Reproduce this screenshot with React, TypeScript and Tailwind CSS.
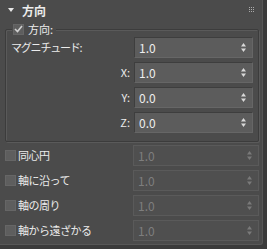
import React from 'react';

const font = { fontFamily: '"Noto Sans CJK JP", "DejaVu Sans", sans-serif' };

const Arrows: React.FC<{ disabled?: boolean }> = ({ disabled }) => (
  <svg width="5" height="9" viewBox="0 0 5 9" className="shrink-0">
    <path d="M2.5 0 L5 3.5 L0 3.5 Z" fill={disabled ? '#7a7a7a' : '#d8d8d8'} />
    <path d="M2.5 9 L5 5.5 L0 5.5 Z" fill={disabled ? '#7a7a7a' : '#d8d8d8'} />
  </svg>
);

const Spinner: React.FC<{ value: string; disabled?: boolean; className?: string }> = ({ value, disabled, className }) => (
  <div
    className={`h-[21px] flex items-center justify-between pl-[4px] pr-[6px] border ${
      disabled
        ? 'bg-[#4f4f4f] border-[#5a5a5a] text-[#7e7e7e]'
        : 'bg-[#5c5c5c] border-t-[#3e3e3e] border-l-[#3e3e3e] border-r-[#666666] border-b-[#666666] text-[#eeeeee]'
    } ${className ?? ''}`}
  >
    <span className="text-[12px] leading-none">{value}</span>
    <Arrows disabled={disabled} />
  </div>
);

const Box: React.FC<{ checked?: boolean }> = ({ checked }) => (
  <div className="w-[11px] h-[11px] bg-[#5e5e5e] border border-[#666] flex items-center justify-center shrink-0">
    {checked && (
      <svg width="9" height="8" viewBox="0 0 9 8">
        <path d="M1 4 L3.5 6.5 L8 1" stroke="#d0d0d0" strokeWidth="1.6" fill="none" />
      </svg>
    )}
  </div>
);

export default function App() {
  const axes = [
    { label: 'X:', value: '1.0' },
    { label: 'Y:', value: '0.0' },
    { label: 'Z:', value: '0.0' },
  ];
  const opts = ['同心円', '軸に沿って', '軸の周り', '軸から遠ざかる'];

  return (
    <div className="w-[267px] h-[249px] bg-[#3b3b3b] pr-[4px] pb-[4px] text-[11px] text-[#ececec]" style={font}>
      <div className="h-full bg-[#4b4b4b] border border-[#575757] border-t-0 border-l-0 rounded-br-[3px]">
        <div className="h-[21px] flex items-center pl-[8px] pr-[8px]">
          <svg width="6" height="4" viewBox="0 0 6 4" className="mt-[-2px]">
            <path d="M0 0 L6 0 L3 4 Z" fill="#e8e8e8" />
          </svg>
          <span className="ml-[8px] text-[12px] font-bold leading-none">方向</span>
          <div className="ml-auto grid grid-cols-3 gap-[1px] mt-[-3px]">
            {Array.from({ length: 9 }).map((_, i) => (
              <div key={i} className="w-[1px] h-[1px] bg-[#aaaaaa]" />
            ))}
          </div>
        </div>

        <div className="relative mt-[8px] ml-[5px] mr-[3px] border border-[#3c3c3c] shadow-[1px_1px_0_#5a5a5a,inset_1px_1px_0_#5a5a5a] rounded-[2px] pt-[7px] pb-[8px] pr-[5px]">
          <div className="absolute -top-[8px] left-[6px] flex items-center gap-[4px] bg-[#4b4b4b] pl-[1px] pr-[3px] h-[14px]">
            <Box checked />
            <span className="leading-none">方向:</span>
          </div>
          <div className="flex flex-col gap-[4px]">
            <div className="flex items-center">
              <span className="pl-[5px] leading-none tracking-[-1.2px]">マグニチュード:</span>
              <Spinner value="1.0" className="ml-auto w-[119px]" />
            </div>
            {axes.map((a) => (
              <div key={a.label} className="flex items-center justify-end">
                <span className="leading-none mr-[4px]">{a.label}</span>
                <Spinner value={a.value} className="w-[119px]" />
              </div>
            ))}
          </div>
        </div>

        <div className="flex flex-col gap-[4px] mt-[3px] pl-[5px] pr-[3px]">
          {opts.map((o) => (
            <div key={o} className="flex items-center">
              <Box />
              <span className="ml-[2px] leading-none tracking-[-0.5px]">{o}</span>
              <Spinner value="1.0" disabled className="ml-auto w-[126px]" />
            </div>
          ))}
        </div>
      </div>
    </div>
  );
}
